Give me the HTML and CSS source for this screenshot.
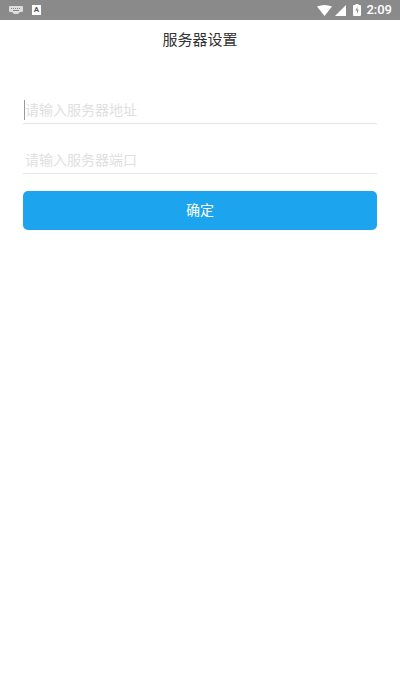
FILE: index.html
```html
<!DOCTYPE html>
<html lang="zh">
<head>
<meta charset="utf-8">
<title>服务器设置</title>
<link rel="stylesheet" href="styles.css">
</head>
<body>
<div class="status">
  <div class="status-left">
    <svg class="kbd" width="14" height="9" viewBox="0 0 14 9"><path fill="#ddd" d="M1 0h12a1 1 0 0 1 1 1v4a1 1 0 0 1-1 1h-2L9 8H5L3 6H1a1 1 0 0 1-1-1V1a1 1 0 0 1 1-1z"/><path fill="#8a8a8a" d="M2 2h1v1H2zM4 2h1v1H4zM6 2h1v1H6zM8 2h1v1H8zM10 2h1v1h-1zM4 4h6v1H4z"/></svg>
    <span class="a-box">A</span>
  </div>
  <div class="status-right">
    <svg width="15" height="11" viewBox="0 0 15 11"><path fill="#fff" d="M0 1.500Q7.500-1.500 15 1.500L7.500 11z"/></svg>
    <svg width="11" height="11" viewBox="0 0 11 11"><path fill="#fff" d="M11 0v11H0z"/></svg>
    <svg class="batt" width="8" height="12" viewBox="0 0 8 12"><path fill="#fff" d="M2.500 0h3v1H7a1 1 0 0 1 1 1v9a1 1 0 0 1-1 1H1a1 1 0 0 1-1-1V2a1 1 0 0 1 1-1h1.500z"/><path fill="#8a8a8a" d="M4.500 2.500 2.500 6.500H4V10L5.800 5.800H4.300z"/></svg>
    <span class="time">2:09</span>
  </div>
</div>
<h1 class="title">服务器设置</h1>
<form class="form">
  <div class="field field-first"><span class="caret"></span><span class="ph">请输入服务器地址</span></div>
  <div class="field"><span class="ph">请输入服务器端口</span></div>
  <div class="btn">确定</div>
</form>
</body>
</html>
```
FILE: styles.css
```css
* { box-sizing: border-box; }
html, body { margin: 0; padding: 0; }
body {
  width: 400px;
  height: 700px;
  background: #fff;
  overflow: hidden;
  font-family: "Noto Sans CJK SC", "Noto Sans", sans-serif;
}
.status {
  height: 20px;
  background: #8a8a8a;
  display: flex;
  justify-content: space-between;
  align-items: center;
  padding: 0 8px 0 9px;
}
.status-left { display: flex; align-items: center; gap: 9px; }
.a-box {
  width: 9px;
  height: 10px;
  background: #fff;
  color: #555;
  font: bold 8px/10px Roboto, sans-serif;
  text-align: center;
}
.status-right { display: flex; align-items: center; gap: 3px; }
.batt { margin-left: 4px; margin-right: 2px; }
.time {
  color: #fff;
  font: 500 13px/20px Roboto, sans-serif;
}
.title {
  margin: 0;
  height: 40px;
  font-size: 15px;
  font-weight: 400;
  line-height: 38px;
  color: #333;
  text-align: center;
}
.form {
  padding: 24px 23px 0;
  display: flex;
  flex-direction: column;
}
.field {
  height: 40px;
  margin-top: 10px;
  border-bottom: 1px solid #e6e6e6;
  display: flex;
  align-items: center;
  padding: 11px 0 0 2px;
  position: relative;
}
.field-first { margin-top: 0; }
.caret {
  position: absolute;
  left: 1px;
  top: 16px;
  width: 1px;
  height: 20px;
  background: #999;
}
.ph {
  font-size: 14px;
  color: #e0e0e0;
  line-height: 20px;
}
.btn {
  margin-top: 17px;
  height: 39px;
  background: #1ca4ee;
  border-radius: 5px;
  color: #fff;
  font-size: 14px;
  text-align: center;
  line-height: 37px;
}
```
